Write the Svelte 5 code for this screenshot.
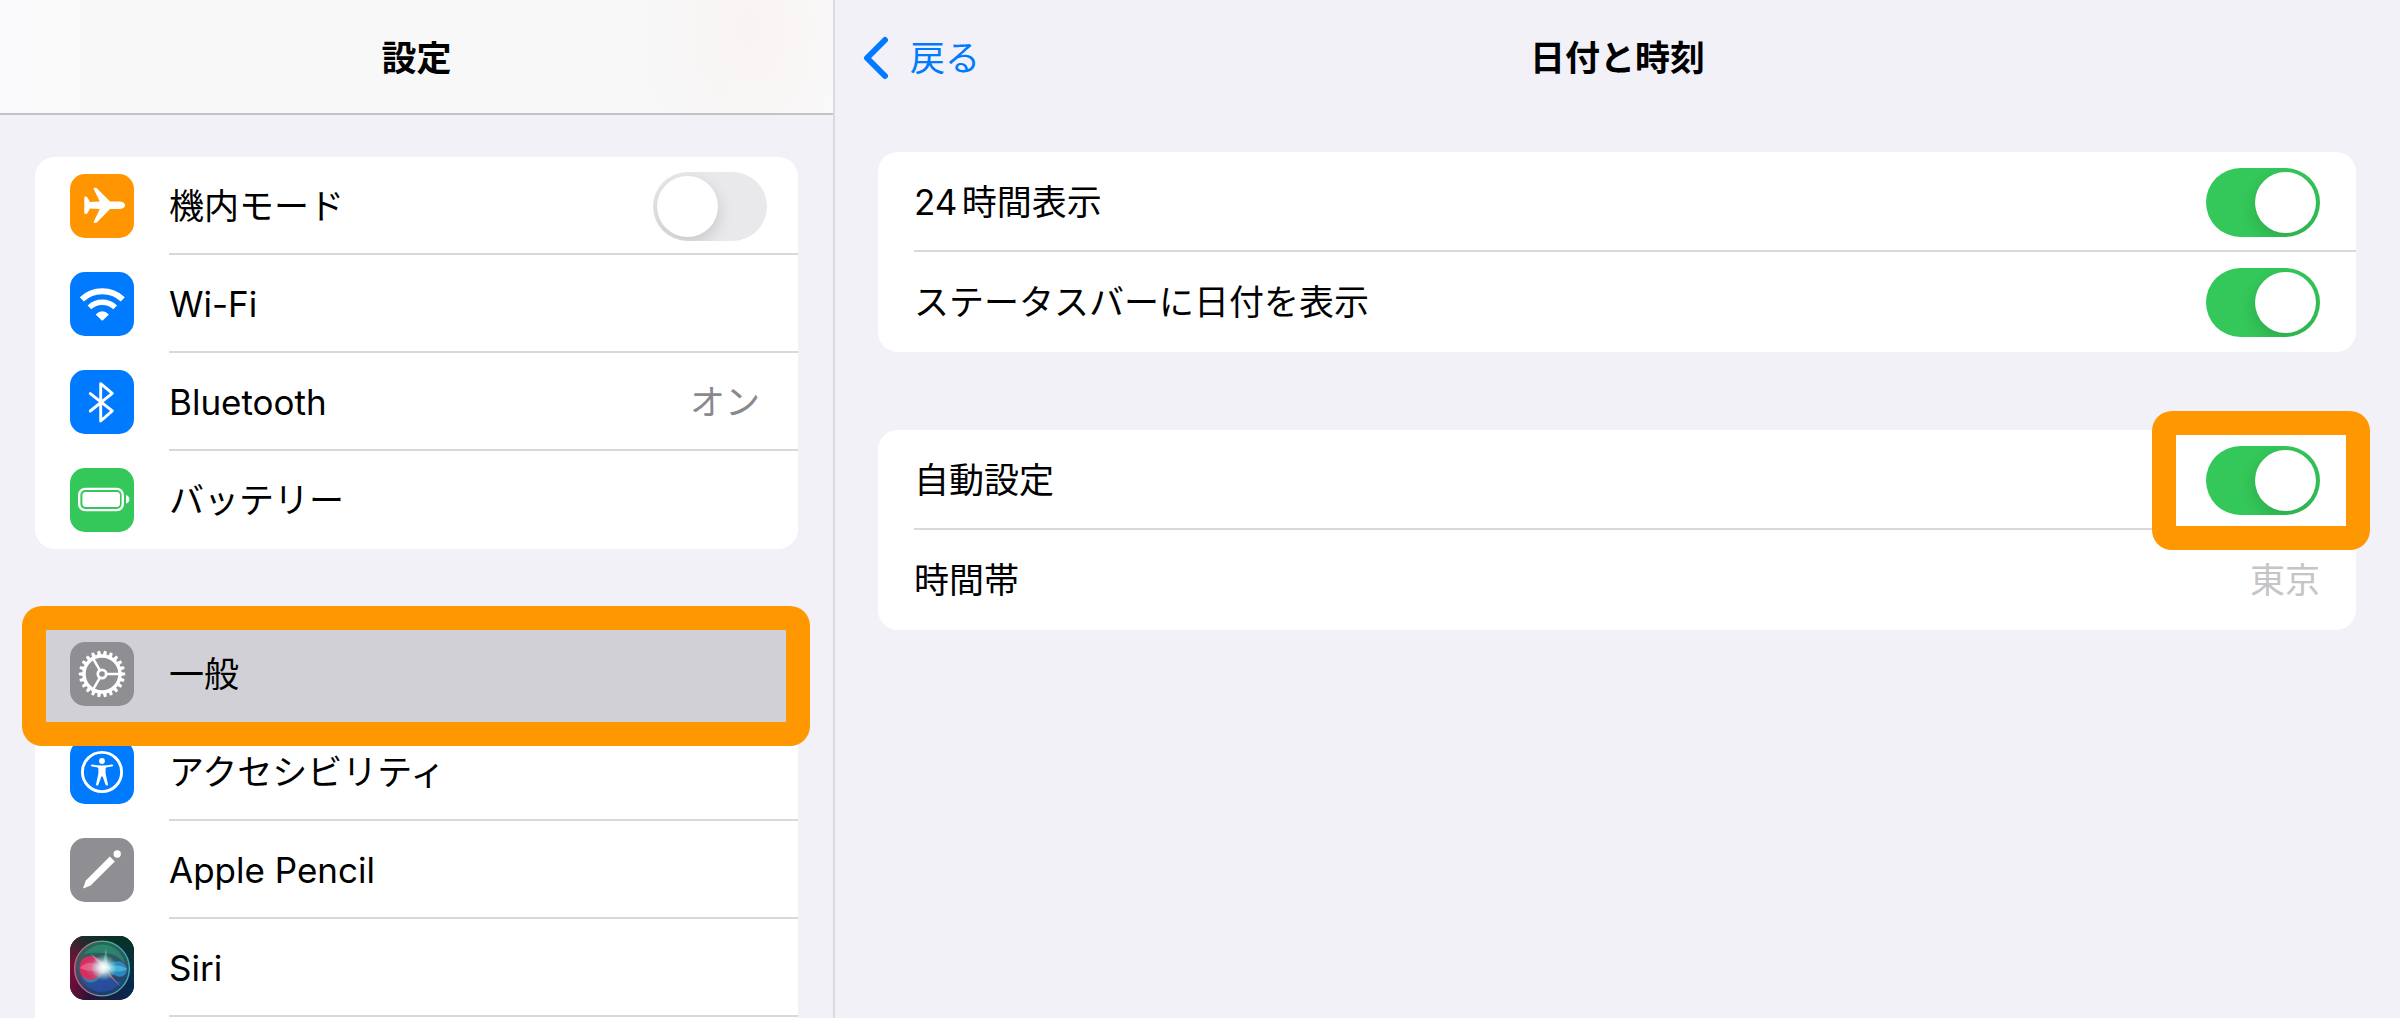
<script>
	const network = [
		{ icon: 'airplane', color: '#ff9500', label: '機内モード', toggle: true },
		{ icon: 'wifi', color: '#007aff', label: 'Wi-Fi' },
		{ icon: 'bluetooth', color: '#007aff', label: 'Bluetooth', value: 'オン' },
		{ icon: 'battery', color: '#34c759', label: 'バッテリー' }
	];

	const system = [
		{ icon: 'gear', color: '#8e8e93', label: '一般', selected: true },
		{ icon: 'accessibility', color: '#007aff', label: 'アクセシビリティ' },
		{ icon: 'pencil', color: '#8e8e93', label: 'Apple Pencil' },
		{ icon: 'siri', color: '#12122e', label: 'Siri' }
	];

	let airplane = $state(false);
	let use24h = $state(true);
	let showDate = $state(true);
	let autoSet = $state(true);

	const teeth = Array.from({ length: 22 }, (_, i) => (i * 360) / 22);
</script>

{#snippet icon(name, color)}
	<svg class="icon" viewBox="0 0 64 64" aria-hidden="true">
		<rect width="64" height="64" rx="15" fill={color} />
		{#if name === 'airplane'}
			<path
				fill="#fff"
				d="M23.7 15Q23.4 13.7 25 13.7Q26.6 13.7 27.4 14.8L40 27.5H50Q55 28.2 55 31.3Q55 34.4 50 35H40L27.4 48Q26.6 49 25 49Q23.4 49 23.7 47.7L29.8 35L20 34.6L17.4 39.2Q16.8 40 15.6 40Q14.3 40 14.3 39V23.6Q14.3 22.6 15.6 22.6Q16.8 22.6 17.4 23.4L20 28L29.8 27.5Z" />
		{:else if name === 'wifi'}
			<g fill="none" stroke="#fff">
				<path stroke-width="6" d="M11.8 27.4A30 30 0 0 1 52.8 27.4" />
				<path stroke-width="5.4" d="M19.4 35.4A18.8 18.8 0 0 1 45.2 35.4" />
			</g>
			<path fill="#fff" d="M25.7 42.6Q32.3 35.8 38.9 42.6L33 48.2Q32.3 48.8 31.6 48.2Z" />
		{:else if name === 'bluetooth'}
			<path
				fill="none"
				stroke="#fff"
				stroke-width="2.9"
				stroke-linecap="round"
				stroke-linejoin="round"
				d="M20.3 23.6L42.3 40.8L30.7 51V13.6L42.3 23.4L20.3 41" />
		{:else if name === 'battery'}
			<rect x="9.2" y="20.9" width="43.6" height="21.2" rx="6" fill="none" stroke="#fff" stroke-width="2.4" />
			<rect x="12.4" y="24" width="37.6" height="15" rx="3.4" fill="#fff" />
			<path fill="#fff" d="M56 27Q59.4 28.4 59.4 31.4Q59.4 34.4 56 35.6Z" />
		{:else if name === 'gear'}
			<g stroke="#fff" fill="none">
				<circle cx="32" cy="32" r="18" stroke-width="3.4" />
				<circle cx="32" cy="32" r="4.2" stroke-width="2.8" />
				{#each [0, 120, 240] as angle}
					<path stroke-width="2.5" d="M37 32H50" transform="rotate({angle} 32 32)" />
				{/each}
			</g>
			{#each teeth as angle}
				<path fill="#fff" d="M50.8 30L55.2 30.7V33.3L50.8 34Z" transform="rotate({angle} 32 32)" />
			{/each}
		{:else if name === 'accessibility'}
			<circle cx="32" cy="32" r="19.6" fill="none" stroke="#fff" stroke-width="2.9" />
			<circle cx="32" cy="21" r="2.9" fill="#fff" />
			<path
				fill="#fff"
				d="M22 24.4Q27 25.4 32 25.4Q37 25.4 42 24.4Q43.3 24.6 43.2 25.6Q43 26.4 41.8 26.6L36.2 27.6Q35.6 27.8 35.6 28.8V33.4L38 44.4Q38 45.6 36.8 45.6Q35.8 45.6 35.5 44.6L32.6 36.4H31.4L28.5 44.6Q28.2 45.6 27.2 45.6Q26 45.6 26 44.4L28.4 33.4V28.8Q28.4 27.8 27.8 27.6L22.2 26.6Q21 26.4 20.8 25.6Q20.7 24.6 22 24.4Z" />
		{:else if name === 'pencil'}
			<path fill="#fff" d="M13.3 49.6L15.8 42.4L39.8 18.4L44.8 23.4L20.6 47.4L14 50.2Q13 50.6 13.3 49.6Z" />
			<circle cx="47.2" cy="16" r="3.7" fill="#fff" />
		{:else if name === 'siri'}
			<defs>
				<linearGradient id="siri-bg" x1="0" y1="0.4" x2="1" y2="0.6">
					<stop offset="0" stop-color="#7d0f35" />
					<stop offset="0.4" stop-color="#2b1238" />
					<stop offset="1" stop-color="#07294f" />
				</linearGradient>
				<linearGradient id="siri-top" x1="0.4" y1="1" x2="0.7" y2="0">
					<stop offset="0.4" stop-color="#0a3a36" stop-opacity="0" />
					<stop offset="1" stop-color="#053326" />
				</linearGradient>
				<linearGradient id="siri-orb" x1="0.4" y1="0" x2="0.6" y2="1">
					<stop offset="0" stop-color="#2a8062" />
					<stop offset="0.5" stop-color="#3a6474" />
					<stop offset="1" stop-color="#1c4480" />
				</linearGradient>
				<linearGradient id="siri-ring">
					<stop offset="0" stop-color="#d8567f" />
					<stop offset="0.5" stop-color="#68a695" />
					<stop offset="1" stop-color="#38b3b3" />
				</linearGradient>
				<radialGradient id="siri-red" cx="0.7">
					<stop offset="0" stop-color="#f0a0bb" />
					<stop offset="0.5" stop-color="#dd4f7c" />
					<stop offset="1" stop-color="#e52a60" />
				</radialGradient>
				<radialGradient id="siri-glow">
					<stop offset="0" stop-color="#fff" />
					<stop offset="0.35" stop-color="#e9fbff" stop-opacity="0.85" />
					<stop offset="1" stop-color="#9bf0e4" stop-opacity="0" />
				</radialGradient>
			</defs>
			<rect width="64" height="64" rx="15" fill="url(#siri-bg)" />
			<rect width="64" height="64" rx="15" fill="url(#siri-top)" />
			<circle cx="32" cy="32.5" r="27.4" fill="url(#siri-orb)" fill-opacity="0.75" stroke="url(#siri-ring)" stroke-width="1.4" />
			<path fill="#35b48a" fill-opacity="0.4" d="M14 18Q24 6 38 9Q52 14 55 28Q46 17 34 17Q22 16 14 18Z" />
			<path fill="#2b57c9" fill-opacity="0.5" d="M10 40Q22 46 33 34Q40 46 52 46Q42 57 29 56Q15 53 10 40Z" />
			<path fill="#36b3b8" fill-opacity="0.5" d="M11 38C16 52 30 48 36 32C30 40 20 44 11 38Z" />
			<path fill="url(#siri-red)" fill-opacity="0.9" d="M36 31C31 18 11 15 9.5 31C9 47 28 49 36 31Z" />
			<path fill="#ff8fae" fill-opacity="0.45" d="M34 31C24 25 14 26 10 32C18 36 26 36 34 31Z" />
			<path fill="#2b93d0" fill-opacity="0.85" d="M36 31C43 23 54 23 57 33C56 44 44 43 36 31Z" />
			<path fill="#7be6ef" fill-opacity="0.4" d="M36 32C44 28 52 29 57 33C50 37 42 36 36 32Z" />
			<path fill="#f07da0" fill-opacity="0.6" d="M35 32L51 51L40 41Z" />
			<path fill="#c8fff0" fill-opacity="0.35" d="M32 32L36 12L38 32ZM33 33L20 17L37 30Z" />
			<circle cx="34" cy="31.5" r="13" fill="url(#siri-glow)" />
		{/if}
	</svg>
{/snippet}

<div class="settings">
	<aside class="sidebar">
		<header class="bar sidebar-bar">
			<h1>設定</h1>
		</header>
		<nav class="groups">
			<ul class="card">
				{#each network as item}
					<li>
						{#if item.toggle}
							<label class="row">
								{@render icon(item.icon, item.color)}
								<span class="cell">
									<span>{item.label}</span>
									<input type="checkbox" class="toggle" bind:checked={airplane} />
								</span>
							</label>
						{:else}
							<button class="row">
								{@render icon(item.icon, item.color)}
								<span class="cell">
									<span>{item.label}</span>
									{#if item.value}<span class="value">{item.value}</span>{/if}
								</span>
							</button>
						{/if}
					</li>
				{/each}
			</ul>
			<ul class="card open">
				{#each system as item}
					<li class:selected={item.selected}>
						<button class="row">
							{@render icon(item.icon, item.color)}
							<span class="cell">{item.label}</span>
						</button>
					</li>
				{/each}
			</ul>
		</nav>
	</aside>

	<main class="detail">
		<header class="bar detail-bar">
			<button class="back">
				<svg viewBox="0 0 26 44" aria-hidden="true">
					<path d="M22 4L4 22L22 40" />
				</svg>
				戻る
			</button>
			<h2>日付と時刻</h2>
		</header>
		<div class="panels">
			<section class="card">
				<label class="option">
					<span class="cell">
						<span>24時間表示</span>
						<input type="checkbox" class="toggle" bind:checked={use24h} />
					</span>
				</label>
				<label class="option">
					<span class="cell">
						<span>ステータスバーに日付を表示</span>
						<input type="checkbox" class="toggle" bind:checked={showDate} />
					</span>
				</label>
			</section>
			<section class="card">
				<label class="option">
					<span class="cell">
						<span>自動設定</span>
						<span class="marked">
							<input type="checkbox" class="toggle" bind:checked={autoSet} />
						</span>
					</span>
				</label>
				<div class="option">
					<span class="cell">
						<span>時間帯</span>
						<span class="value disabled">東京</span>
					</span>
				</div>
			</section>
		</div>
	</main>
</div>

<style>
	:global(body) {
		margin: 0;
		background: #f2f1f8;
	}

	.settings {
		display: grid;
		grid-template-columns: 835fr 1565fr;
		height: 100vh;
		overflow: hidden;
		font-family: Inter, 'Noto Sans CJK JP', sans-serif;
		font-size: 35px;
		line-height: 48px;
		color: #000;
		text-autospace: normal;
	}

	.sidebar {
		display: flex;
		flex-direction: column;
		min-height: 0;
		border-right: 2px solid #dbdadf;
	}

	.bar {
		display: grid;
		align-items: center;
		box-sizing: border-box;
		height: 115px;
		padding-top: 3px;
		flex: none;
		border-bottom: 2px solid transparent;
	}

	.sidebar-bar {
		justify-items: center;
		background:
			radial-gradient(ellipse 110px 160px at 90% 25%, #f9f4f3, transparent),
			linear-gradient(90deg, #fafafc, #f8f8f8 18%, #f8f8f8 80%, #fafafa);
		border-bottom-color: #c3c3c6;
	}

	.detail-bar {
		grid-template-columns: 1fr auto 1fr;
	}

	h1,
	h2 {
		margin: 0;
		font-size: 35px;
		font-weight: 700;
	}

	button {
		border: 0;
		background: none;
		font: inherit;
		color: inherit;
		text-align: left;
		cursor: pointer;
	}

	.back {
		display: flex;
		align-items: center;
		justify-self: start;
		gap: 21px;
		padding: 0 28px;
		color: #007aff;
	}

	.back svg {
		width: 26px;
		height: 44px;
		fill: none;
		stroke: currentColor;
		stroke-width: 6;
		stroke-linecap: round;
		stroke-linejoin: round;
	}

	.groups {
		display: flex;
		flex-direction: column;
		flex: 1;
		gap: 76px;
		padding: 42px 35px 0;
	}

	.card {
		margin: 0;
		padding: 0;
		list-style: none;
		background: #fff;
		border-radius: 20px;
	}

	.card.open {
		flex: 1;
		border-radius: 20px 20px 0 0;
	}

	.row {
		display: flex;
		align-items: center;
		box-sizing: border-box;
		width: 100%;
		height: 98px;
		padding: 0 0 0 35px;
		gap: 35px;
	}

	.icon {
		width: 64px;
		height: 64px;
		flex: none;
	}

	.cell {
		display: flex;
		align-items: center;
		justify-content: space-between;
		box-sizing: border-box;
		flex: 1;
		height: 100%;
		padding-top: 2px;
		border-bottom: 2px solid #d9d9db;
	}

	.row .cell {
		padding-right: 31px;
	}

	.card:not(.open) > :last-child .cell,
	.selected .cell {
		border-bottom-color: transparent;
	}

	.value {
		color: #8a8a8e;
		padding-right: 7px;
	}

	.value.disabled {
		color: #c5c5c7;
		padding-right: 0;
	}

	.selected,
	.marked {
		position: relative;
	}

	.selected {
		background: #d1d0d7;
		border-radius: 20px 20px 0 0;
	}

	/* orange frames that point at the settings to tap */
	.selected::after,
	.marked::after {
		content: '';
		position: absolute;
		border: 24px solid #ff9800;
		border-radius: 20px;
		pointer-events: none;
	}

	.selected::after {
		inset: -19px -12px -23px -13px;
	}

	.marked {
		display: flex;
	}

	.marked::after {
		inset: -35px -50px -35px -54px;
	}

	.toggle {
		appearance: none;
		display: flex;
		box-sizing: border-box;
		width: 114px;
		height: 69px;
		margin: 0;
		padding: 4px;
		flex: none;
		border-radius: 35px;
		background: #e9e9eb;
		overflow: hidden;
		cursor: pointer;
	}

	.toggle::before {
		content: '';
		width: 61px;
		height: 61px;
		border-radius: 50%;
		background: #fff;
		box-shadow: 0 6px 16px rgba(0, 0, 0, 0.15);
	}

	.toggle:checked {
		justify-content: flex-end;
		background: #34c759;
	}

	.detail {
		min-width: 0;
	}

	.panels {
		display: flex;
		flex-direction: column;
		gap: 78px;
		padding: 37px 44px 0 43px;
	}

	.option {
		display: flex;
		height: 100px;
		padding-left: 36px;
	}

	.option .cell {
		padding-right: 36px;
	}
</style>
